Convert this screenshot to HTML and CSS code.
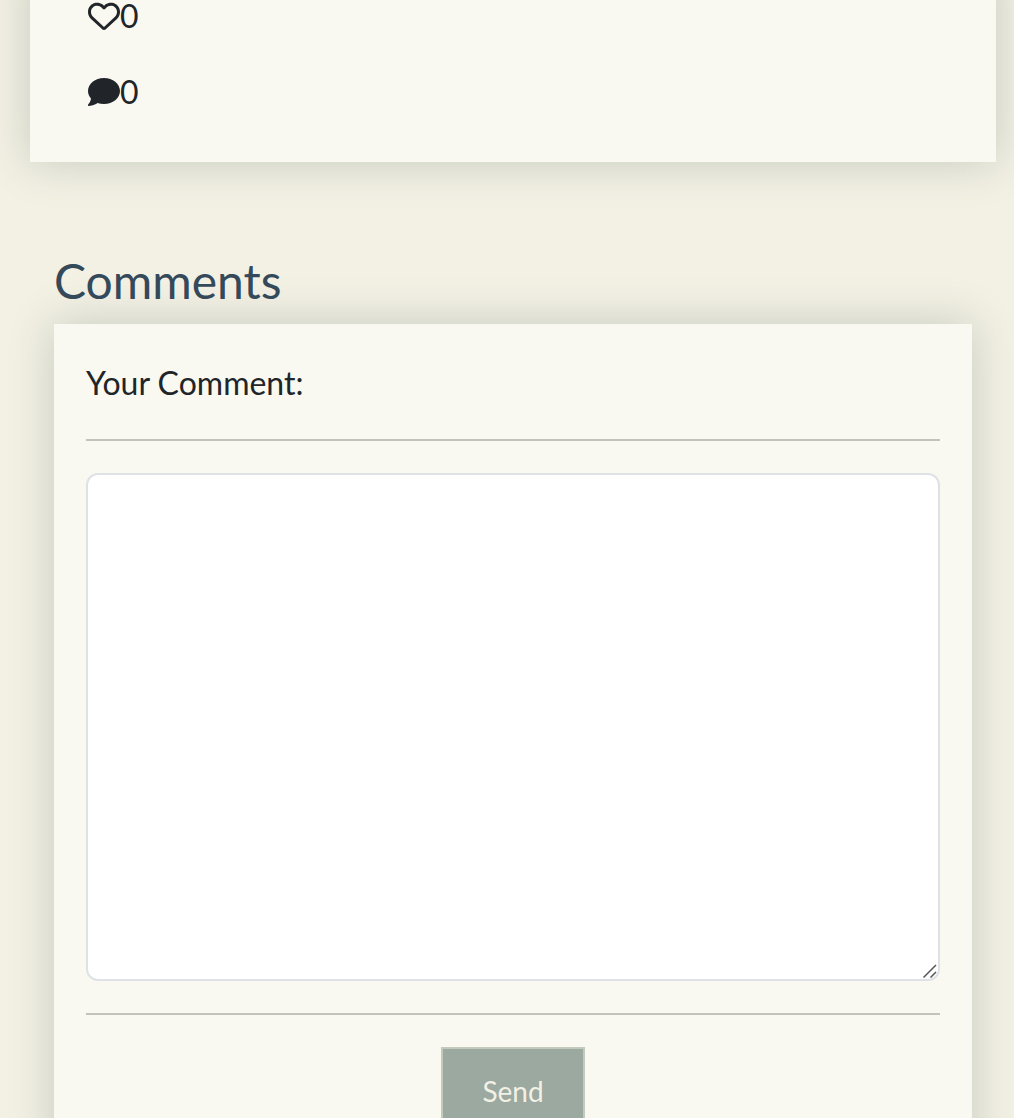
FILE: index.html
```html
<!DOCTYPE html>
<html lang="en">
<head>
<meta charset="utf-8">
<title>Comments</title>
<link rel="stylesheet" href="styles.css">
</head>
<body>
<main class="page">
  <section class="post">
    <div class="stat">
      <svg class="icon" viewBox="0 0 512 512" aria-hidden="true"><path d="M225.8 468.2l-2.5-2.3L48.1 303.2C17.4 274.7 0 234.7 0 192.8v-3.3c0-70.4 50-130.8 119.2-144C158.6 37.9 198.9 47 231 69.6c9 6.4 17.4 13.8 25 22.3c4.2-4.8 8.7-9.2 13.5-13.3c3.7-3.2 7.5-6.2 11.5-9c0 0 0 0 0 0C313.1 47 353.4 37.9 392.8 45.4C462 58.6 512 119.1 512 189.5v3.3c0 41.9-17.4 81.9-48.1 110.4L288.7 465.9l-2.5 2.3c-8.2 7.6-19 11.9-30.2 11.9s-22-4.2-30.2-11.9zM239.1 145c-.4-.3-.7-.7-1-1.1l-17.8-20c0 0-.1-.1-.1-.1c0 0 0 0 0 0c-23.1-25.9-58-37.7-92-31.2C81.6 101.5 48 142.1 48 189.5v3.3c0 28.5 11.9 55.8 32.8 75.2L256 430.7 431.2 268c20.9-19.4 32.8-46.7 32.8-75.2v-3.3c0-47.3-33.6-88-80.1-96.9c-34-6.5-69 5.4-92 31.2c0 0 0 0-.1 .1s0 0-.1 .1l-17.8 20c-.3 .4-.7 .7-1 1.1c-4.5 4.5-10.6 7-16.9 7s-12.4-2.5-16.9-7z"/></svg>
      <span>0</span>
    </div>
    <div class="stat">
      <svg class="icon" viewBox="0 0 512 512" aria-hidden="true"><path d="M512 240c0 114.9-114.6 208-256 208c-37.1 0-72.3-6.4-104.1-17.9c-11.9 8.7-31.3 20.6-54.3 30.6C73.6 471.1 44.7 480 16 480c-6.500 0-12.300-3.900-14.800-9.900c-2.500-6-1.100-12.800 3.400-17.400c0 0 0 0 .3-.3c.3-.3 .7-.7 1.300-1.400c1.100-1.200 2.800-3.100 4.900-5.700c4.100-5 9.600-12.400 15.200-21.600c10-16.600 19.500-38.400 21.400-62.900C17.700 326.800 0 285.100 0 240C0 125.100 114.600 32 256 32s256 93.100 256 208z"/></svg>
      <span>0</span>
    </div>
  </section>
  <section class="comments">
    <h3 class="comments-title">Comments</h3>
    <form class="comment-form">
      <label class="comment-label" for="comment">Your Comment:</label>
      <hr class="rule">
      <div class="field">
        <textarea class="comment-input" id="comment"></textarea>
        <svg class="grip" viewBox="0 0 16 16" aria-hidden="true"><path d="M1.500 14.500L14 2M8.500 14.500L14 9"/></svg>
      </div>
      <hr class="rule">
      <button class="send" type="button">Send</button>
    </form>
  </section>
</main>
</body>
</html>
```
FILE: styles.css
```css
* {
  box-sizing: border-box;
}

body {
  margin: 0;
  background: #f3f0e4;
  color: #212529;
  font: 32px/48px Lato, sans-serif;
}

.page {
  height: 1118px;
  padding: 0 18px 0 30px;
  overflow: hidden;
}

.post,
.comment-form {
  background: #f9f9f1;
  box-shadow: 0 0 40px rgba(59, 104, 80, 0.25);
}

.post {
  display: flex;
  flex-direction: column;
  gap: 28px;
  height: 202px;
  margin-top: -40px;
  padding: 32px 58px 0;
}

.stat {
  display: flex;
  align-items: center;
  height: 48px;
}

.icon {
  width: 32px;
  height: 32px;
  fill: currentColor;
}

.comments {
  padding: 90px 24px 0;
}

.comments-title {
  margin: 0 0 14px;
  color: #34495a;
  font-size: 48px;
  font-weight: 400;
  line-height: 58px;
}

.comment-form {
  display: flex;
  flex-direction: column;
  height: 860px;
  padding: 35px 32px;
}

.comment-label {
  height: 48px;
}

.rule {
  width: 100%;
  height: 2px;
  margin: 32px 0;
  border: 0;
  background: #c3c3bd;
}

.field {
  position: relative;
  height: 508px;
}

.comment-input {
  display: block;
  width: 100%;
  height: 100%;
  padding: 12px 24px;
  border: 2px solid #dee2e6;
  border-radius: 12px;
  background: #fff;
  font: inherit;
  resize: none;
}

.grip {
  position: absolute;
  right: 2px;
  bottom: 2px;
  width: 16px;
  height: 16px;
  fill: none;
  stroke: #555;
  stroke-width: 1.5;
}

.send {
  align-self: center;
  flex: none;
  width: 144px;
  height: 88px;
  padding: 0;
  border: 2px solid #c2cbbb;
  background: #9ba9a1;
  color: #f3f0e4;
  font: 28px/42px Lato, sans-serif;
}
```
